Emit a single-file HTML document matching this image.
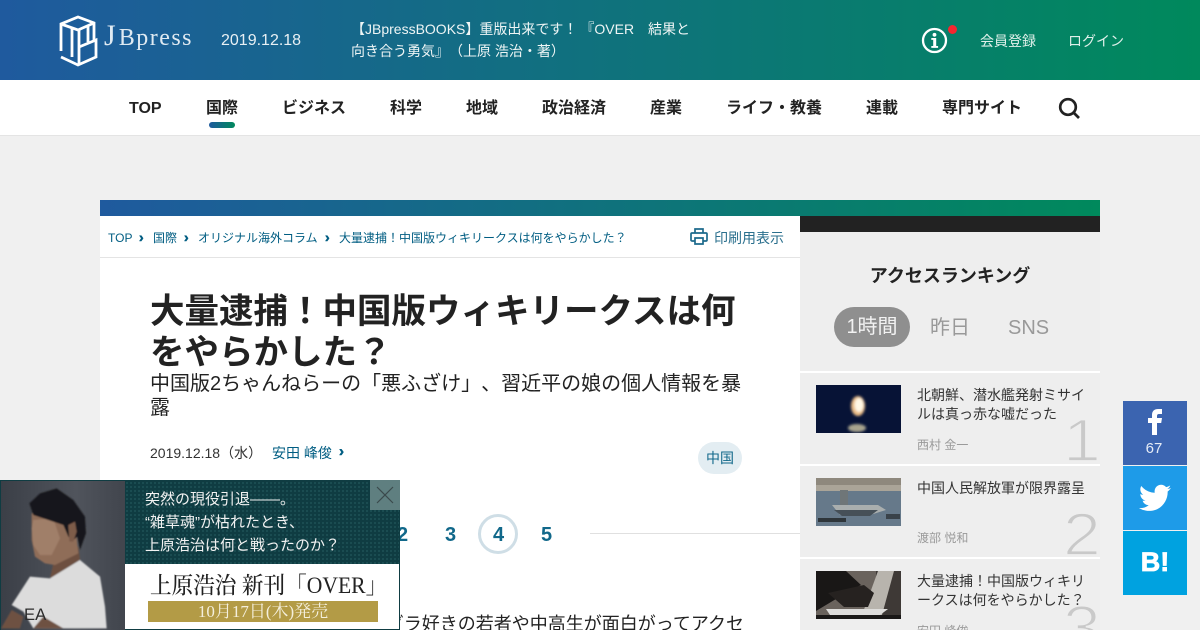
<!DOCTYPE html>
<html lang="ja"><head><meta charset="utf-8"><title>JBpress</title>
<style>
*{margin:0;padding:0;box-sizing:border-box}
html,body{width:1200px;height:630px;overflow:hidden}
body{background:#f0f0f0;font-family:"Liberation Sans","Noto Sans CJK JP",sans-serif;color:#222;text-spacing-trim:space-all}
#w{position:relative;width:1200px;height:630px;overflow:hidden}
.a{position:absolute;white-space:nowrap}
.nav{font-size:16px;font-weight:700;top:97px;line-height:22px;color:#222;margin-top:.5px}
.bc{font-size:12px;color:#005d82;top:230px;line-height:16px}
.bca{font-size:14px;font-weight:700;color:#005d82;top:229px;line-height:16px;-webkit-text-stroke:.5px #005d82}
.rt{font-size:14px;line-height:19px;color:#333;white-space:normal;width:172px;left:917px}
.rn{font-size:12px;color:#999;left:917px;line-height:16px}
.num{font-size:68px;color:#c9c9c9;line-height:68px;left:1063px;-webkit-text-stroke:2px #eee;transform:scaleY(.88);transform-origin:0 57.500px}
.pg{font-size:20px;font-weight:700;color:#11688a;top:523px;line-height:24px}
.sep{position:absolute;left:800px;width:300px;height:2px;background:#fff}
</style></head><body><div id="w">
<div class="a" style="left:0;top:0;width:1200px;height:80px;background:linear-gradient(90deg,#1f5a9e,#00895c)"></div>
<svg class="a" style="left:59px;top:15px" width="40" height="52" viewBox="0 0 40 52" fill="none" stroke="#fff" stroke-width="2.800">
<path d="M2 36V9L19 2l16 6v17"/><path d="M2 9l17 6 16-7"/><path d="M2 42l17 8 18-8V25L20 32"/><path d="M13 13V42"/><path d="M20 15v35"/><path d="M29 11V27"/></svg>
<div class="a" style="left:104px;top:20px;font-family:'Liberation Serif','Noto Serif CJK SC',serif;font-size:24px;letter-spacing:1.500px;line-height:36px;color:#dfeaf2"><span style="font-size:30px;font-weight:400;letter-spacing:3px;line-height:0">J</span>Bpress</div>
<div class="a" style="left:221px;top:31px;font-size:16px;line-height:20px;color:#e8f0f4">2019.12.18</div>
<div class="a" style="left:351px;top:18px;font-size:14px;line-height:22px;color:#eef5f5;white-space:pre">【JBpressBOOKS】重版出来です！<span style="margin-left:3px">『OVER　結果と</span>
向き合う勇気』（上原 浩治・著）</div>
<svg class="a" style="left:921px;top:27px" width="27" height="27" viewBox="0 0 27 27"><circle cx="13.500" cy="13.500" r="11.500" fill="none" stroke="#fff" stroke-width="2.300"/><circle cx="13.500" cy="7.800" r="1.900" fill="#fff"/><path d="M10.300 11h4.900v8h1.900v1.900h-6.800V19h1.900v-6.100h-1.900z" fill="#fff"/></svg>
<div class="a" style="left:948px;top:25px;width:9px;height:9px;border-radius:50%;background:#f5252f"></div>
<div class="a" style="left:980px;top:31px;font-size:14px;line-height:20px;color:#dff0ea">会員登録</div>
<div class="a" style="left:1068px;top:31px;font-size:14px;line-height:20px;color:#dff0ea">ログイン</div>

<div class="a" style="left:0;top:80px;width:1200px;height:56px;background:#fff;border-bottom:1px solid #e4e4e4"></div>
<div class="a nav" style="left:129px">TOP</div>
<div class="a nav" style="left:206px">国際</div>
<div class="a" style="left:209px;top:122px;width:26px;height:6px;border-radius:3px;background:linear-gradient(90deg,#1f5a9e,#00895c)"></div>
<div class="a nav" style="left:282px">ビジネス</div>
<div class="a nav" style="left:390px">科学</div>
<div class="a nav" style="left:466px">地域</div>
<div class="a nav" style="left:542px">政治経済</div>
<div class="a nav" style="left:650px">産業</div>
<div class="a nav" style="left:726px">ライフ・教養</div>
<div class="a nav" style="left:866px">連載</div>
<div class="a nav" style="left:942px">専門サイト</div>
<svg class="a" style="left:1058px;top:97px" width="22" height="22" viewBox="0 0 22 22" fill="none" stroke="#222" stroke-width="2.700"><circle cx="10" cy="10" r="7.800"/><path d="M15.500 15.500l5.500 5.500"/></svg>

<div class="a" style="left:100px;top:200px;width:1000px;height:16px;background:linear-gradient(90deg,#1f5a9e,#00895c)"></div>
<div class="a" style="left:100px;top:216px;width:700px;height:414px;background:#fff"></div>
<div class="a" style="left:100px;top:257px;width:700px;height:1px;background:#e4e4e4"></div>
<div class="a bc" style="left:108px">TOP</div><div class="a bca" style="left:139px">›</div>
<div class="a bc" style="left:153px">国際</div><div class="a bca" style="left:184px">›</div>
<div class="a bc" style="left:198px">オリジナル海外コラム</div><div class="a bca" style="left:325px">›</div>
<div class="a bc" style="left:339px">大量逮捕！中国版ウィキリークスは何をやらかした？</div>
<svg class="a" style="left:690px;top:228px" width="18" height="17" viewBox="0 0 18 17" fill="none" stroke="#1d6a8c" stroke-width="1.700"><path d="M5 5V1h8v4"/><path d="M5 13H2a1 1 0 0 1-1-1V6a1 1 0 0 1 1-1h14a1 1 0 0 1 1 1v6a1 1 0 0 1-1 1h-3"/><path d="M5 10h8v6H5z"/></svg>
<div class="a" style="left:714px;top:229px;font-size:14px;line-height:18px;color:#2a6f8d">印刷用表示</div>

<div class="a" style="left:150px;top:292px;width:600px;font-size:34.500px;font-weight:700;line-height:41px;white-space:normal;color:#222">大量逮捕！中国版ウィキリークスは何をやらかした？</div>
<div class="a" style="left:150px;top:372px;width:600px;font-size:20px;line-height:24px;white-space:normal;color:#222">中国版2ちゃんねらーの「悪ふざけ」、習近平の娘の個人情報を暴露</div>
<div class="a" style="left:150px;top:444px;font-size:14px;line-height:18px;color:#333">2019.12.18（水）</div>
<div class="a" style="left:272px;top:444px;font-size:14px;line-height:18px;color:#005d82">安田 峰俊</div>
<div class="a" style="left:339px;top:443px;font-size:15px;font-weight:700;line-height:18px;color:#005d82;-webkit-text-stroke:.5px #005d82">›</div>
<div class="a" style="left:698px;top:442px;width:44px;height:32px;border-radius:16px;background:#e3edf2;text-align:center;font-size:14px;line-height:32px;color:#11688a">中国</div>

<div class="a pg" style="left:397px">2</div>
<div class="a pg" style="left:445px">3</div>
<div class="a" style="left:478px;top:514px;width:40px;height:40px;border:3px solid #cfdee6;border-radius:50%"></div>
<div class="a pg" style="left:493px">4</div>
<div class="a pg" style="left:541px">5</div>
<div class="a" style="left:590px;top:533px;width:210px;height:1px;background:#e0e0e0"></div>
<div class="a" style="left:150px;top:612px;font-size:18px;line-height:24px;color:#222;width:594px;overflow:hidden;text-align:right">グラ好きの若者や中高生が面白がってアクセ</div>

<div class="a" style="left:800px;top:216px;width:300px;height:16px;background:#222"></div>
<div class="a" style="left:800px;top:232px;width:300px;height:398px;background:#eee"></div>
<div class="a" style="left:800px;top:264px;width:300px;text-align:center;font-size:18px;font-weight:700;line-height:24px;color:#222">アクセスランキング</div>
<div class="a" style="left:834px;top:307px;width:76px;height:40px;border-radius:20px;background:#8f8f8f;text-align:center;font-size:20px;line-height:40px;color:#f2f2f2">1時間</div>
<div class="a" style="left:930px;top:316px;font-size:20px;line-height:24px;color:#999">昨日</div>
<div class="a" style="left:1008px;top:316px;font-size:20px;line-height:24px;color:#999">SNS</div>

<div class="sep" style="top:371px"></div>
<svg class="a" style="left:816px;top:385px" width="85" height="48" viewBox="0 0 85 48"><defs><filter id="b1"><feGaussianBlur stdDeviation="1.200"/></filter></defs><rect width="85" height="48" fill="#071336"/><g filter="url(#b1)"><ellipse cx="42" cy="21" rx="7" ry="10" fill="#e9bb85"/><ellipse cx="43" cy="20" rx="4.500" ry="7" fill="#fff8e6"/><ellipse cx="41" cy="43" rx="9" ry="4" fill="#a8a48e"/></g></svg>
<div class="a rt" style="top:386px">北朝鮮、潜水艦発射ミサイルは真っ赤な嘘だった</div>
<div class="a rn" style="top:437px">西村 金一</div>
<div class="a num" style="top:404px">1</div>

<div class="sep" style="top:464px"></div>
<svg class="a" style="left:816px;top:478px" width="85" height="48" viewBox="0 0 85 48"><rect width="85" height="48" fill="#66798a"/><rect width="85" height="12" fill="#8e887d"/><rect y="7" width="85" height="6" fill="#aaa498"/><path d="M16 27h46l8 5-16 5H24z" fill="#a9aeae"/><path d="M24 12h8v15h-8z" fill="#6f7678"/><path d="M18 32h44l-8 6H26z" fill="#465058"/><rect x="2" y="40" width="28" height="4" fill="#2e353a"/><rect x="70" y="36" width="14" height="5" fill="#39424a"/></svg>
<div class="a rt" style="top:479px">中国人民解放軍が限界露呈</div>
<div class="a rn" style="top:530px">渡部 悦和</div>
<div class="a num" style="top:498px">2</div>

<div class="sep" style="top:557px"></div>
<svg class="a" style="left:816px;top:571px" width="85" height="48" viewBox="0 0 85 48"><rect width="85" height="48" fill="#6a635d"/><path d="M0 0h30L45 14 20 28 0 40z" fill="#191716"/><path d="M60 0h25v48H60z" fill="#3e3936"/><path d="M62 0h16L66 44H46z" fill="#b8b4ad"/><path d="M10 38h62l-8 6H14z" fill="#dedddb"/><path d="M12 22l36-8 10 8-6 14H28z" fill="#262220"/><rect y="44" width="85" height="4" fill="#1a1817"/></svg>
<div class="a rt" style="top:572px">大量逮捕！中国版ウィキリークスは何をやらかした？</div>
<div class="a rn" style="top:623px">安田 峰俊</div>
<div class="a num" style="top:591px">3</div>

<div class="a" style="left:1123px;top:401px;width:64px;height:64px;background:#3b64b0"></div>
<svg class="a" style="left:1147px;top:408px" width="16" height="28" viewBox="0 0 16 28"><path d="M5 27V15H1v-5h4V7c0-4 2.400-6 6-6h4v5h-3c-1.400 0-2 .6-2 2v2h5l-.8 5H10v12z" fill="#fff"/></svg>
<div class="a" style="left:1123px;top:440px;width:62px;text-align:center;font-size:15px;line-height:18px;color:#e6ecf6">67</div>
<div class="a" style="left:1123px;top:466px;width:64px;height:64px;background:#1e9be8"></div>
<svg class="a" style="left:1139px;top:484px" width="32" height="28" viewBox="0 0 24 21"><path d="M24 3c-.9.400-1.800.7-2.800.8 1-.6 1.800-1.600 2.200-2.700-1 .6-2 1-3.100 1.200C19.300 1.200 18 .6 16.600.6c-2.700 0-4.900 2.200-4.900 4.900 0 .4 0 .8.100 1.100C7.700 6.400 4.100 4.400 1.700 1.500 1.300 2.200 1 3.100 1 4c0 1.700.9 3.200 2.200 4.100-.8 0-1.600-.2-2.200-.6v.1c0 2.400 1.700 4.400 3.900 4.800-.7.200-1.500.2-2.200.1.600 2 2.400 3.400 4.600 3.400-2.100 1.600-4.800 2.400-7.300 2.100C2.200 19.400 4.800 20.200 7.500 20.200c9.100 0 14-7.500 14-14v-.6c1-.7 1.800-1.600 2.500-2.600z" fill="#fff"/></svg>
<div class="a" style="left:1123px;top:531px;width:64px;height:64px;background:#00a2e0;text-align:center;font-size:27px;font-weight:700;line-height:63px;color:#fff;-webkit-text-stroke:.8px #fff">B!</div>

<div class="a" style="left:0;top:480px;width:400px;height:150px;background:#0f3c42;border:1px solid #0f3c42"></div>
<svg class="a" style="left:0;top:480px" width="125" height="150" viewBox="0 0 375 450"><defs><linearGradient id="pb" x1="0" x2="1" y1="0" y2="0"><stop offset="0" stop-color="#3b3f47"/><stop offset=".6" stop-color="#50545c"/><stop offset="1" stop-color="#41454d"/></linearGradient><filter id="b2"><feGaussianBlur stdDeviation="2"/></filter></defs><rect x="3" y="3" width="372" height="447" fill="url(#pb)"/><g filter="url(#b2)">
<path d="M160 250l-10 45 90-55-5-40z" fill="#6d4f40"/>
<path d="M150 295l90-55 60 50 15 90 5 65H100l-30-50-35-20 55-85z" fill="#dcdcdc"/>
<path d="M3 445l32-55 35 20-10 35zM100 445l30-35 60 35z" fill="#6e5142"/>
<path d="M95 120v60l10 50 30 20 30 5 70-35-10-90-65-25-65-5z" fill="#8f6d58"/>
<path d="M100 120l60-5 20 60-25 50-35 0-20-30-5-50z" fill="#a07f69"/>
<path d="M88 70l32-30 50-15 50 35 35 50 3 50-18 50-8-40-12 10-15-10-15-35-90-30z" fill="#19181a"/>
<path d="M205 135l20-10 5 30-10 30-12 0z" fill="#7d5c4a"/></g>
<text x="72" y="420" font-family="Liberation Sans" font-size="50" fill="#2b2b2b">EA</text></svg>
<div class="a" style="left:125px;top:481px;width:274px;height:83px;background-color:#0f3c42;background-image:radial-gradient(circle,#1b4d52 1px,transparent 1.200px);background-size:4px 4px"></div>
<div class="a" style="left:145px;top:488px;font-size:15px;line-height:23px;color:#f2f2f2;white-space:pre">突然の現役引退――。
“雑草魂”が枯れたとき、
上原浩治は何と戦ったのか？</div>
<div class="a" style="left:370px;top:480px;width:30px;height:30px;background:#5f7f80"></div>
<svg class="a" style="left:370px;top:480px" width="30" height="30" fill="none" stroke="#3b4a4c" stroke-width="1.200"><path d="M7 7l16 16M23 7L7 23"/></svg>
<div class="a" style="left:125px;top:564px;width:274px;height:65px;background:#fff"></div>
<div class="a" style="left:150px;top:571px;font-family:'Liberation Serif','Noto Serif CJK SC',serif;font-size:23px;font-weight:500;line-height:30px;color:#222;transform:scaleX(.94);transform-origin:0 0">上原浩治 新刊「OVER」</div>
<div class="a" style="left:148px;top:601px;width:230px;height:21px;background:#b39b46;text-align:center;font-family:'Liberation Serif','Noto Serif CJK SC',serif;font-size:17px;line-height:21px;color:#f4efdc">10月17日(木)発売</div>
</div></body></html>
